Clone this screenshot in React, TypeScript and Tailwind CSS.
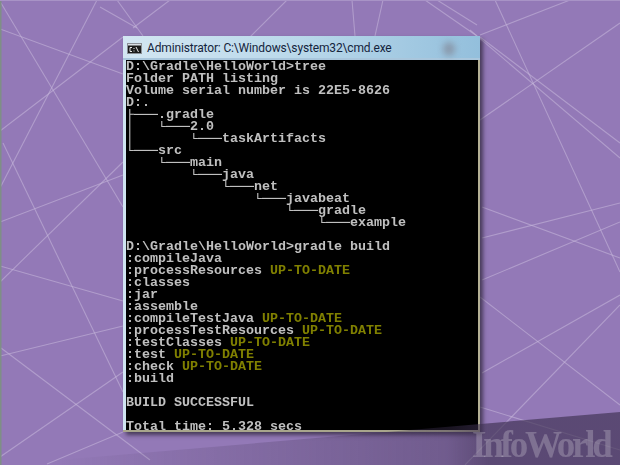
import React from 'react';

const bgLines = [
  [1, 3, 123, 207], [0, 29, 123, 74], [97, 0, 0, 188], [0, 131, 123, 37],
  [3, 143, 123, 392], [0, 222, 123, 175], [123, 162, 0, 282], [0, 266, 123, 301],
  [0, 356, 123, 326], [1, 348, 150, 460], [0, 457, 123, 372], [47, 464, 123, 432],
  [495, 0, 620, 272], [570, 0, 480, 35], [470, 30, 620, 158], [480, 37, 620, 143],
  [620, 23, 480, 120], [482, 207, 620, 258], [620, 203, 482, 238], [482, 280, 620, 222],
  [480, 297, 620, 405], [482, 373, 620, 295], [620, 305, 465, 465],
  [480, 407, 620, 450], [117, 0, 143, 36], [100, 7, 137, 28], [170, 0, 133, 28],
  [287, 0, 250, 37], [352, 0, 355, 36], [383, 0, 375, 36], [425, 0, 477, 36], [437, 0, 477, 25],
];

const consoleLines: [string, string?][] = [
  ['D:\\Gradle\\HelloWorld>tree'],
  ['Folder PATH listing'],
  ['Volume serial number is 22E5-8626'],
  ['D:.'],
  ['├───.gradle'],
  ['│   └───2.0'],
  ['│       └───taskArtifacts'],
  ['└───src'],
  ['    └───main'],
  ['        └───java'],
  ['            └───net'],
  ['                └───javabeat'],
  ['                    └───gradle'],
  ['                        └───example'],
  [''],
  ['D:\\Gradle\\HelloWorld>gradle build'],
  [':compileJava'],
  [':processResources ', 'UP-TO-DATE'],
  [':classes'],
  [':jar'],
  [':assemble'],
  [':compileTestJava ', 'UP-TO-DATE'],
  [':processTestResources ', 'UP-TO-DATE'],
  [':testClasses ', 'UP-TO-DATE'],
  [':test ', 'UP-TO-DATE'],
  [':check ', 'UP-TO-DATE'],
  [':build'],
  [''],
  ['BUILD SUCCESSFUL'],
  [''],
  ['Total time: 5.328 secs'],
];

function CmdIcon() {
  return (
    <svg width="15" height="11" viewBox="0 0 15 11" className="shrink-0">
      <rect width="15" height="11" fill="#1a1a1a" />
      <rect x="0.5" y="0.5" width="14" height="10" fill="none" stroke="#8a8f96" />
      <rect x="1" y="1" width="13" height="1.5" fill="#d8dde2" />
      <path d="M5 4.5H3v4h2M7 5v1M7 7.5v1M9 4l2.5 5" fill="none" stroke="#e8e8e8" strokeWidth="1" />
    </svg>
  );
}

function ConsoleRow({ text, status }: { text: string; status?: string }) {
  const tree = text.match(/^[│├└─ ]*/)?.[0] ?? '';
  return (
    <div className="h-[12px] whitespace-pre leading-[12px]">
      {tree && (
        <span className="inline-block h-[12px] overflow-hidden align-top font-['DejaVu_Sans_Mono'] text-[13.29px] font-normal">
          {tree}
        </span>
      )}
      {text.slice(tree.length)}
      {status && <span className="text-[#808000]">{status}</span>}
    </div>
  );
}

export default function App() {
  return (
    <div className="relative flex h-[465px] w-[620px] items-start overflow-hidden bg-[#9379b7] pl-[123px] pt-[36px]">
      <svg width="620" height="465" className="absolute left-0 top-0">
        {bgLines.map(([x1, y1, x2, y2], i) => (
          <line key={i} x1={x1} y1={y1} x2={x2} y2={y2} stroke="#c9b9dc" strokeOpacity="0.55" strokeWidth="1.1" />
        ))}
        <rect x="0" y="0" width="1.5" height="465" fill="#7f8f86" />
        <rect x="0" y="0" width="620" height="1" fill="#a893c6" />
      </svg>

      <div className="relative flex h-[396px] w-[357px] flex-col bg-[#cfe4f1] pl-[3px] pr-[2px] pb-[2px] shadow-[3px_3px_4px_rgba(30,25,40,0.65)]">
        <div className="absolute inset-y-0 right-0 w-[2px] bg-[#b4b095]" />
        <div className="absolute inset-x-0 bottom-0 h-[2px] bg-[#a8a58c]" />
        <div className="relative -ml-[3px] -mr-[2px] flex h-[24px] shrink-0 items-center gap-[5px] overflow-hidden bg-gradient-to-r from-[#d3e6f2] via-[#b9d8ea] to-[#93bfdc] pl-[4px] shadow-[inset_0_-2px_0_#a9c6dc]">
          <CmdIcon />
          <span className="font-['Roboto'] text-[12px] leading-none tracking-[-0.15px] text-[#14243c]">
            Administrator: C:\Windows\system32\cmd.exe
          </span>
          <div className="absolute left-[320px] top-[6px] h-[14px] w-[12px] rounded-full bg-[#7f7f8c]/60 blur-[3px]" />
        </div>
        <div className="h-[370px] overflow-hidden bg-black pt-[1px] font-['Liberation_Mono'] text-[13.33px] font-bold text-[#c0c0c0] [will-change:transform]">
          {consoleLines.map(([text, status], i) => (
            <ConsoleRow key={i} text={text} status={status} />
          ))}
        </div>
      </div>

      <svg width="620" height="465" className="pointer-events-none absolute left-0 top-0">
        <defs>
          <linearGradient id="band" x1="60" y1="0" x2="490" y2="0" gradientUnits="userSpaceOnUse">
            <stop offset="0" stopColor="#3d3050" stopOpacity="0" />
            <stop offset="0.9" stopColor="#3d3050" stopOpacity="0.4" />
            <stop offset="1" stopColor="#3d3050" stopOpacity="0.65" />
          </linearGradient>
        </defs>
        <polygon points="620,412 60,460 60,465 620,465" fill="url(#band)" />
      </svg>

      <span className="absolute left-[472px] top-[423px] font-['Liberation_Serif'] text-[37px] font-bold leading-[44px] tracking-[-3.2px] text-[#ffffff38]">
        InfoWorld
      </span>
    </div>
  );
}
